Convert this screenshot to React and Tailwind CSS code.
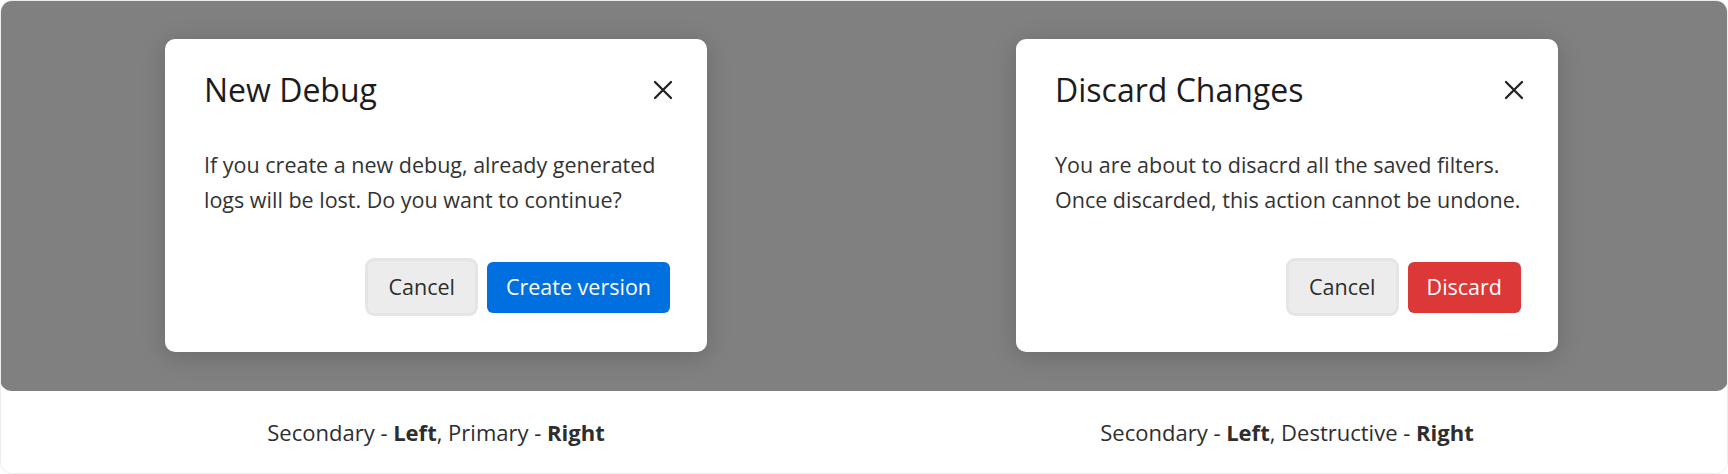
import React from "react";

function CloseIcon() {
  return (
    <svg width="20" height="20" viewBox="0 0 20 20" fill="none" className="block">
      <path d="M2 2 L18 18 M18 2 L2 18" stroke="#222" strokeWidth="2.3" strokeLinecap="round" />
    </svg>
  );
}

function Modal({ title, lines, primaryLabel, primaryClass }) {
  return (
    <div className="w-[542px] h-[313px] bg-white rounded-[10px] shadow-[0_4px_24px_rgba(0,0,0,0.18)] flex flex-col pl-[39px] pr-[37px] pt-[32px] pb-[39px]">
      <div className="flex items-center justify-between h-[38px]">
        <h2 className="text-[32px] leading-[38px] text-[#1c1c1c] font-normal">{title}</h2>
        <div className="mr-[-3px]">
          <CloseIcon />
        </div>
      </div>
      <div className="mt-[38px] text-[21.5px] leading-[35px] text-[#333]">
        {lines.map((l) => (
          <p key={l}>{l}</p>
        ))}
      </div>
      <div className="mt-auto flex justify-end items-center gap-[12px]">
        <button className="h-[52px] px-[20px] rounded-[6px] bg-[#ececec] text-[21.5px] text-[#2d2d2d] ring-[3px] ring-[#e5e5e5]">
          Cancel
        </button>
        <button className={"h-[51px] px-[19px] rounded-[6px] text-[21.5px] text-white " + primaryClass}>
          {primaryLabel}
        </button>
      </div>
    </div>
  );
}

export default function App() {
  return (
    <div
      className="w-[1728px] h-[474px] bg-white rounded-xl border border-[#ededed] overflow-hidden flex flex-col"
      style={{ fontFamily: "'Open Sans', 'Noto Sans', sans-serif" }}
    >
      <div className="-mx-px -mt-px h-[391px] shrink-0 bg-[#808080] rounded-xl grid grid-cols-[542px_542px] gap-x-[309px] pl-[165px] pt-[39px]">
        <Modal
          title="New Debug"
          lines={[
            "If you create a new debug, already generated",
            "logs will be lost. Do you want to continue?",
          ]}
          primaryLabel="Create version"
          primaryClass="bg-[#0070e0]"
        />
        <Modal
          title="Discard Changes"
          lines={[
            "You are about to disacrd all the saved filters.",
            "Once discarded, this action cannot be undone.",
          ]}
          primaryLabel="Discard"
          primaryClass="bg-[#dc3838]"
        />
      </div>
      <div className="grid grid-cols-[542px_542px] gap-x-[309px] pl-[164px] pt-[26px] text-[22px] leading-[30px] text-[#2e2e2e]">
        <p className="text-center">
          Secondary - <b className="font-bold">Left</b>, Primary - <b className="font-bold">Right</b>
        </p>
        <p className="text-center">
          Secondary - <b className="font-bold">Left</b>, Destructive - <b className="font-bold">Right</b>
        </p>
      </div>
    </div>
  );
}
